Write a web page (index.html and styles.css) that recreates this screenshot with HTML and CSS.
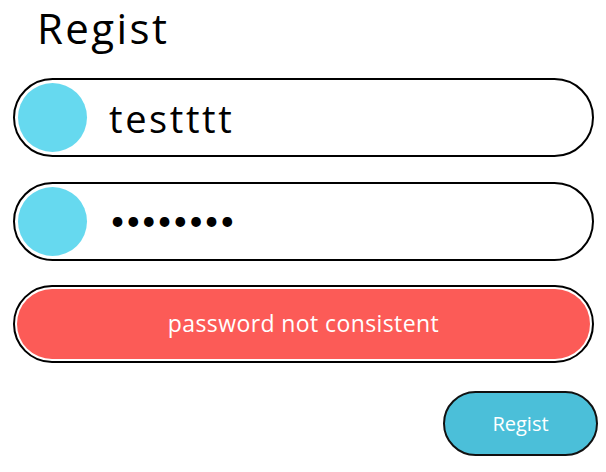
FILE: index.html
```html
<!DOCTYPE html>
<html>
<head>
<meta charset="utf-8">
<link rel="stylesheet" href="styles.css">
</head>
<body>
<form class="form">
  <h1 class="title">Regist</h1>
  <label class="field">
    <span class="avatar"></span>
    <input class="field-input" type="text" value="testttt">
  </label>
  <label class="field">
    <span class="avatar"></span>
    <input class="field-input field-password" type="password" value="abcdefgh">
  </label>
  <div class="error">
    <div class="error-inner">password not consistent</div>
  </div>
  <div class="actions">
    <button class="submit" type="button">Regist</button>
  </div>
</form>
</body>
</html>
```
FILE: styles.css
```css
* { box-sizing: border-box; }
html, body { margin: 0; padding: 0; background: #fff; }
body { font-family: "Open Sans", "Lato", sans-serif; font-weight: 400; color: #000; }
.form {
  width: 606px;
  padding: 0 12px 0 13px;
  display: flex;
  flex-direction: column;
}
.title {
  margin: 0 0 0 24px;
  height: 78px;
  font-size: 42px;
  font-weight: 400;
  letter-spacing: 2.4px;
  line-height: 56px;
}
.field {
  display: flex;
  align-items: center;
  height: 79px;
  border: 2px solid #000;
  border-radius: 40px;
  padding: 3px;
  margin-bottom: 25px;
}
.field + .field { margin-bottom: 24px; }
.avatar {
  flex: none;
  width: 69px;
  height: 69px;
  border-radius: 50%;
  background: #66d9ef;
}
.field-input {
  flex: 1;
  min-width: 0;
  border: 0;
  outline: 0;
  background: transparent;
  margin-left: 22px;
  padding: 0;
  font-family: inherit;
  font-weight: 400;
  font-size: 38px;
  letter-spacing: 2.6px;
  color: #000;
}
.field-password {
  font-family: "Lato", sans-serif;
  font-size: 26px;
  letter-spacing: 0.6px;
  margin-left: 23px;
  margin-top: -3px;
}
.error {
  height: 78px;
  border: 2px solid #000;
  border-radius: 40px;
  padding: 2px;
  margin-bottom: 28px;
}
.error-inner {
  height: 100%;
  border-radius: 36px;
  background: #fc5b57;
  color: #fff;
  font-size: 23px;
  letter-spacing: 0.4px;
  display: flex;
  align-items: center;
  justify-content: center;
  padding-bottom: 2px;
}
.actions {
  display: flex;
  justify-content: flex-end;
  margin-right: -4px;
}
.submit {
  width: 155px;
  height: 65px;
  border: 2px solid #111;
  border-radius: 33px;
  background: #4bbfd9;
  color: #fff;
  font-family: inherit;
  font-weight: 400;
  font-size: 20px;
}
```
